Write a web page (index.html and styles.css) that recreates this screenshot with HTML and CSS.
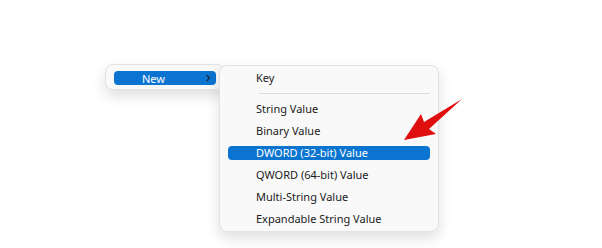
FILE: index.html
```html
<!DOCTYPE html>
<html lang="en">
<head>
    <meta charset="UTF-8">
    <title>New menu</title>
    <link rel="stylesheet" href="styles.css">
</head>
<body>
    <div class="stage">
        <div class="menu parent">
            <div class="item active">
                <span>New</span>
                <svg class="chevron" width="8" height="8" viewBox="0 0 8 8"><path d="M2.5 1 L5.5 4 L2.5 7" fill="none" stroke="#1a1a1a" stroke-width="1.2"/></svg>
            </div>
        </div>
        <div class="menu sub">
            <div class="item">Key</div>
            <div class="sep"></div>
            <div class="item">String Value</div>
            <div class="item">Binary Value</div>
            <div class="item active">DWORD (32-bit) Value</div>
            <div class="item">QWORD (64-bit) Value</div>
            <div class="item">Multi-String Value</div>
            <div class="item">Expandable String Value</div>
        </div>
        <svg class="pointer" width="602" height="248" viewBox="0 0 602 248">
            <polygon points="404,140 421,114 424,122 462,99 429,129 436,134" fill="#e00f0f"/>
        </svg>
    </div>
</body>
</html>
```

FILE: styles.css
```css
body {
    margin: 0;
    background: #fff;
    font-family: "Noto Sans", "Segoe UI", sans-serif;
    font-size: 11px;
    color: #1a1a1a;
}
.stage {
    position: relative;
    width: 602px;
    height: 248px;
    display: flex;
    align-items: flex-start;
}
.menu {
    background: #f9f9f9;
    border: 1px solid #e3e3e3;
    border-radius: 8px;
    box-sizing: border-box;
    box-shadow: 0 6px 14px rgba(0, 0, 0, 0.13);
}
.parent {
    margin: 64px 0 0 105px;
    width: 120px;
    padding: 6px 0 4px;
}
.parent .item {
    height: 14px;
    margin: 0 8px;
    padding-left: 28px;
    display: flex;
    align-items: center;
    justify-content: space-between;
    padding-right: 4px;
}
.chevron {
    display: block;
}
.sub {
    margin: 65px 0 0 -6px;
    width: 220px;
    padding: 1px 0;
    position: relative;
    display: flex;
    flex-direction: column;
}
.sub .item {
    height: 14px;
    margin: 4px 8px;
    padding-left: 28px;
    line-height: 14px;
}
.item.active {
    background: #0a74d0;
    color: #fff;
    border-radius: 4px;
}
.item.active .chevron path {
    stroke: #1a2a40;
}
.sep {
    height: 1px;
    background: #dcdcdc;
    margin: 4px 8px 4px 39px;
}
.pointer {
    position: absolute;
    left: 0;
    top: 0;
}
```
